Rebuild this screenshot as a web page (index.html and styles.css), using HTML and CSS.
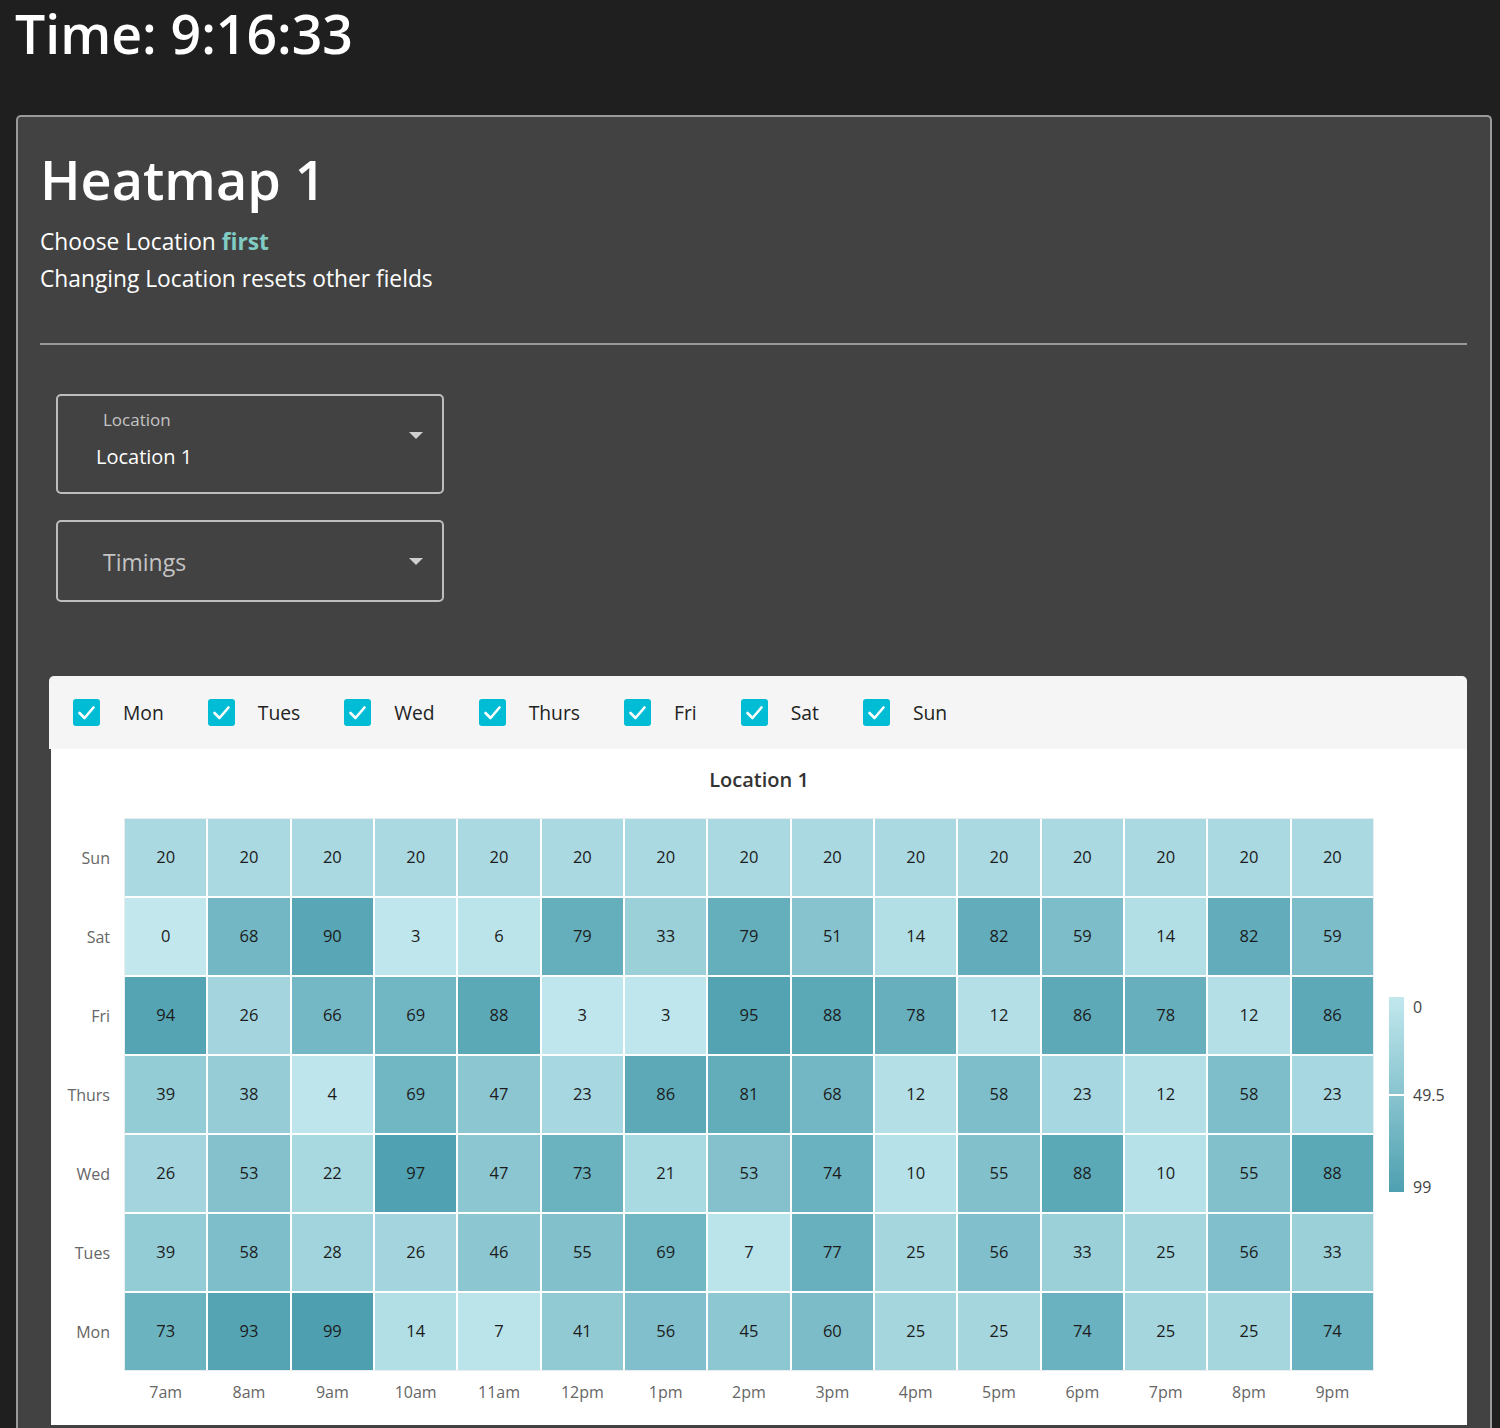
FILE: index.html
```html
<!DOCTYPE html>
<html lang="en">
<head>
<meta charset="utf-8">
<title>Heatmap</title>
<link rel="stylesheet" href="styles.css">
</head>
<body>
<div class="topbar"><h1 class="time">Time: 9:16:33</h1></div>
<div class="card">
  <h2 class="title">Heatmap 1</h2>
  <p class="note">Choose Location <b class="accent">first</b></p>
  <p class="note">Changing Location resets other fields</p>
  <hr class="rule">
  <div class="form">
    <div class="select filled">
      <div class="select-text">
        <span class="select-label">Location</span>
        <span class="select-value">Location 1</span>
      </div>
      <span class="caret caret-top"></span>
    </div>
    <div class="select empty">
      <span class="select-placeholder">Timings</span>
      <span class="caret"></span>
    </div>
  </div>
  <div class="chart-wrap">
    <div class="days">
      <label class="day"><span class="box"><svg viewBox="0 0 27 27" width="27" height="27"><polyline points="6.5,14 11.5,19 20.5,8.5" fill="none" stroke="#fff" stroke-width="2.6" stroke-linecap="round" stroke-linejoin="round"/></svg></span><span class="day-name">Mon</span></label>
      <label class="day"><span class="box"><svg viewBox="0 0 27 27" width="27" height="27"><polyline points="6.5,14 11.5,19 20.5,8.5" fill="none" stroke="#fff" stroke-width="2.6" stroke-linecap="round" stroke-linejoin="round"/></svg></span><span class="day-name">Tues</span></label>
      <label class="day"><span class="box"><svg viewBox="0 0 27 27" width="27" height="27"><polyline points="6.5,14 11.5,19 20.5,8.5" fill="none" stroke="#fff" stroke-width="2.6" stroke-linecap="round" stroke-linejoin="round"/></svg></span><span class="day-name">Wed</span></label>
      <label class="day"><span class="box"><svg viewBox="0 0 27 27" width="27" height="27"><polyline points="6.5,14 11.5,19 20.5,8.5" fill="none" stroke="#fff" stroke-width="2.6" stroke-linecap="round" stroke-linejoin="round"/></svg></span><span class="day-name">Thurs</span></label>
      <label class="day"><span class="box"><svg viewBox="0 0 27 27" width="27" height="27"><polyline points="6.5,14 11.5,19 20.5,8.5" fill="none" stroke="#fff" stroke-width="2.6" stroke-linecap="round" stroke-linejoin="round"/></svg></span><span class="day-name">Fri</span></label>
      <label class="day"><span class="box"><svg viewBox="0 0 27 27" width="27" height="27"><polyline points="6.5,14 11.5,19 20.5,8.5" fill="none" stroke="#fff" stroke-width="2.6" stroke-linecap="round" stroke-linejoin="round"/></svg></span><span class="day-name">Sat</span></label>
      <label class="day"><span class="box"><svg viewBox="0 0 27 27" width="27" height="27"><polyline points="6.5,14 11.5,19 20.5,8.5" fill="none" stroke="#fff" stroke-width="2.6" stroke-linecap="round" stroke-linejoin="round"/></svg></span><span class="day-name">Sun</span></label>
    </div>
    <div class="chart">
      <div class="chart-title">Location 1</div>
      <div class="plot">
        <div class="ylabels">
          <span>Sun</span><span>Sat</span><span>Fri</span><span>Thurs</span><span>Wed</span><span>Tues</span><span>Mon</span>
        </div>
        <div class="cells">
          <span class="cell" style="--v:20">20</span><span class="cell" style="--v:20">20</span><span class="cell" style="--v:20">20</span><span class="cell" style="--v:20">20</span><span class="cell" style="--v:20">20</span><span class="cell" style="--v:20">20</span><span class="cell" style="--v:20">20</span><span class="cell" style="--v:20">20</span><span class="cell" style="--v:20">20</span><span class="cell" style="--v:20">20</span><span class="cell" style="--v:20">20</span><span class="cell" style="--v:20">20</span><span class="cell" style="--v:20">20</span><span class="cell" style="--v:20">20</span><span class="cell" style="--v:20">20</span>
          <span class="cell" style="--v:0">0</span><span class="cell" style="--v:68">68</span><span class="cell" style="--v:90">90</span><span class="cell" style="--v:3">3</span><span class="cell" style="--v:6">6</span><span class="cell" style="--v:79">79</span><span class="cell" style="--v:33">33</span><span class="cell" style="--v:79">79</span><span class="cell" style="--v:51">51</span><span class="cell" style="--v:14">14</span><span class="cell" style="--v:82">82</span><span class="cell" style="--v:59">59</span><span class="cell" style="--v:14">14</span><span class="cell" style="--v:82">82</span><span class="cell" style="--v:59">59</span>
          <span class="cell" style="--v:94">94</span><span class="cell" style="--v:26">26</span><span class="cell" style="--v:66">66</span><span class="cell" style="--v:69">69</span><span class="cell" style="--v:88">88</span><span class="cell" style="--v:3">3</span><span class="cell" style="--v:3">3</span><span class="cell" style="--v:95">95</span><span class="cell" style="--v:88">88</span><span class="cell" style="--v:78">78</span><span class="cell" style="--v:12">12</span><span class="cell" style="--v:86">86</span><span class="cell" style="--v:78">78</span><span class="cell" style="--v:12">12</span><span class="cell" style="--v:86">86</span>
          <span class="cell" style="--v:39">39</span><span class="cell" style="--v:38">38</span><span class="cell" style="--v:4">4</span><span class="cell" style="--v:69">69</span><span class="cell" style="--v:47">47</span><span class="cell" style="--v:23">23</span><span class="cell" style="--v:86">86</span><span class="cell" style="--v:81">81</span><span class="cell" style="--v:68">68</span><span class="cell" style="--v:12">12</span><span class="cell" style="--v:58">58</span><span class="cell" style="--v:23">23</span><span class="cell" style="--v:12">12</span><span class="cell" style="--v:58">58</span><span class="cell" style="--v:23">23</span>
          <span class="cell" style="--v:26">26</span><span class="cell" style="--v:53">53</span><span class="cell" style="--v:22">22</span><span class="cell" style="--v:97">97</span><span class="cell" style="--v:47">47</span><span class="cell" style="--v:73">73</span><span class="cell" style="--v:21">21</span><span class="cell" style="--v:53">53</span><span class="cell" style="--v:74">74</span><span class="cell" style="--v:10">10</span><span class="cell" style="--v:55">55</span><span class="cell" style="--v:88">88</span><span class="cell" style="--v:10">10</span><span class="cell" style="--v:55">55</span><span class="cell" style="--v:88">88</span>
          <span class="cell" style="--v:39">39</span><span class="cell" style="--v:58">58</span><span class="cell" style="--v:28">28</span><span class="cell" style="--v:26">26</span><span class="cell" style="--v:46">46</span><span class="cell" style="--v:55">55</span><span class="cell" style="--v:69">69</span><span class="cell" style="--v:7">7</span><span class="cell" style="--v:77">77</span><span class="cell" style="--v:25">25</span><span class="cell" style="--v:56">56</span><span class="cell" style="--v:33">33</span><span class="cell" style="--v:25">25</span><span class="cell" style="--v:56">56</span><span class="cell" style="--v:33">33</span>
          <span class="cell" style="--v:73">73</span><span class="cell" style="--v:93">93</span><span class="cell" style="--v:99">99</span><span class="cell" style="--v:14">14</span><span class="cell" style="--v:7">7</span><span class="cell" style="--v:41">41</span><span class="cell" style="--v:56">56</span><span class="cell" style="--v:45">45</span><span class="cell" style="--v:60">60</span><span class="cell" style="--v:25">25</span><span class="cell" style="--v:25">25</span><span class="cell" style="--v:74">74</span><span class="cell" style="--v:25">25</span><span class="cell" style="--v:25">25</span><span class="cell" style="--v:74">74</span>
        </div>
        <div class="legend">
          <div class="legend-bar"><span class="legend-tick"></span></div>
          <div class="legend-labels"><span>0</span><span class="legend-mid">49.5</span><span>99</span></div>
        </div>
        <div class="xlabels">
          <span>7am</span><span>8am</span><span>9am</span><span>10am</span><span>11am</span><span>12pm</span><span>1pm</span><span>2pm</span><span>3pm</span><span>4pm</span><span>5pm</span><span>6pm</span><span>7pm</span><span>8pm</span><span>9pm</span>
        </div>
      </div>
    </div>
  </div>
</div>
</body>
</html>
```

FILE: styles.css
```css
* { box-sizing: border-box; }

html, body {
  margin: 0;
  padding: 0;
  background: #1f1f1f;
  font-family: "Open Sans", "Noto Sans", sans-serif;
  color: #fff;
}

.topbar {
  height: 115px;
  padding: 2px 0 0 15px;
}

.time {
  margin: 0;
  font-size: 53.5px;
  font-weight: 600;
  line-height: 64px;
}

.card {
  margin: 0 8px 0 16px;
  background: #424242;
  border: 2px solid #9a9a9a;
  border-bottom: none;
  border-radius: 5px 5px 0 0;
  padding: 30px 23px 40px 22px;
}

.title {
  margin: 0;
  font-size: 54px;
  font-weight: 600;
  line-height: 64px;
}

.note {
  margin: 0;
  font-size: 22.75px;
  line-height: 37px;
}
.card .title + .note { margin-top: 12px; }

.accent {
  color: #80cbc4;
  font-weight: 700;
}

.rule {
  margin: 46px 0 0 0;
  border: none;
  height: 2px;
  background: #9a9a9a;
}

.form {
  margin-top: 49px;
  padding-left: 16px;
  display: flex;
  flex-direction: column;
  gap: 26px;
}

.select {
  width: 388px;
  border: 2px solid #bdbdbd;
  border-radius: 5px;
  display: flex;
}

.filled {
  height: 100px;
  align-items: flex-start;
  padding: 14px 19px 0 38px;
}

.select-text {
  display: flex;
  flex-direction: column;
  flex: 1;
}

.select-label {
  font-size: 17px;
  line-height: 20px;
  color: #c4c4c4;
  padding-left: 7px;
}

.select-value {
  margin-top: 15px;
  font-size: 20px;
  line-height: 24px;
  color: #fff;
}

.empty {
  height: 82px;
  align-items: center;
  padding: 0 19px 0 45px;
}

.select-placeholder {
  flex: 1;
  font-size: 23px;
  line-height: 30px;
  color: #c4c4c4;
  margin-top: 2px;
}

.caret {
  width: 0;
  height: 0;
  border-left: 7px solid transparent;
  border-right: 7px solid transparent;
  border-top: 7px solid #cfcfcf;
}

.caret-top { margin-top: 22px; }

.chart-wrap {
  margin-top: 74px;
  margin-left: 9px;
}

.days {
  height: 73px;
  background: #f5f5f5;
  border-radius: 5px 5px 0 0;
  display: flex;
  align-items: center;
  padding-left: 24px;
}

.day {
  display: flex;
  align-items: center;
  margin-right: 44px;
}

.box {
  width: 27px;
  height: 27px;
  border-radius: 3px;
  background: #00bcd4;
  display: block;
  margin-right: 23px;
}
.box svg { display: block; }

.day-name {
  font-size: 19.3px;
  color: #222;
  line-height: 28px;
}

.chart {
  margin-left: 2px;
  background: #fff;
  padding: 17px 0 21px 0;
}

.chart-title {
  text-align: center;
  font-size: 20px;
  font-weight: 600;
  line-height: 28px;
  color: #333;
}

.plot {
  margin-top: 25px;
  display: grid;
  grid-template-columns: 74px 1248px auto;
  grid-template-rows: 551px auto;
}

.ylabels {
  grid-column: 1;
  grid-row: 1;
  display: grid;
  grid-template-rows: repeat(7, 1fr);
  gap: 2px;
}

.ylabels span {
  display: flex;
  align-items: center;
  justify-content: flex-end;
  padding-right: 15px;
  font-size: 16px;
  color: #666;
}

.cells {
  grid-column: 2;
  grid-row: 1;
  display: grid;
  grid-template-columns: repeat(15, 1fr);
  grid-template-rows: repeat(7, 1fr);
  gap: 2px;
  background: #fff;
  outline: 1px solid #e8eef0;
}

.cell {
  display: flex;
  align-items: center;
  justify-content: center;
  font-size: 16.5px;
  color: #1c1c1c;
  padding-bottom: 2px;
  background: color-mix(in srgb, #4ea0b0 calc(var(--v) * 1.0101%), #c2e8ee);
}

.legend {
  grid-column: 3;
  grid-row: 1;
  align-self: center;
  display: flex;
  align-items: flex-start;
  margin-left: 16px;
}

.legend-bar {
  width: 15px;
  height: 195px;
  background: linear-gradient(#c2e8ee, #4ea0b0);
  display: flex;
  align-items: center;
}

.legend-tick {
  display: block;
  width: 100%;
  height: 2px;
  background: #fff;
}

.legend-labels {
  height: 200px;
  display: flex;
  flex-direction: column;
  justify-content: space-between;
  margin-left: 9px;
  margin-bottom: -5px;
  font-size: 16px;
  line-height: 20px;
  color: #444;
}

.legend-mid { margin-bottom: 5px; }

.xlabels {
  grid-column: 2;
  grid-row: 2;
  display: grid;
  grid-template-columns: repeat(15, 1fr);
  gap: 2px;
  margin-top: 10px;
}

.xlabels span {
  text-align: center;
  font-size: 16px;
  line-height: 24px;
  color: #666;
}
```
